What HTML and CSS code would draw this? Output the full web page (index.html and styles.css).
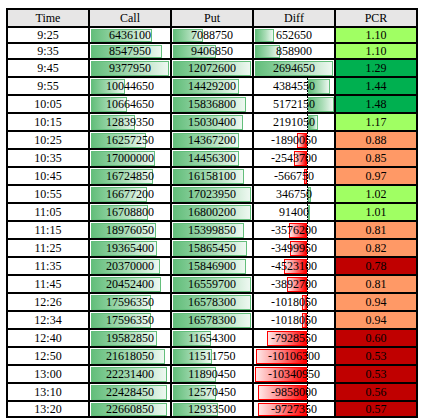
FILE: index.html
```html
<!DOCTYPE html>
<html>
<head>
<meta charset="utf-8">
<link rel="stylesheet" href="styles.css">
</head>
<body>
<table class="grid">
  <thead>
    <tr class="head"><th>Time</th><th>Call</th><th>Put</th><th>Diff</th><th>PCR</th></tr>
  </thead>
  <tbody>
    <tr class="short"><td>9:25</td><td class="bc"><span class="bar g" style="width:61px"></span><span class="v">6436100</span></td><td class="bc"><span class="bar g" style="width:30px"></span><span class="v">7088750</span></td><td class="bc"><span class="bar g" style="width:19px"></span><span class="v">652650</span></td><td class="pcr lg">1.10</td></tr>
    <tr class="short"><td>9:35</td><td class="bc"><span class="bar g" style="width:71px"></span><span class="v">8547950</span></td><td class="bc"><span class="bar g" style="width:43px"></span><span class="v">9406850</span></td><td class="bc"><span class="bar g" style="width:25px"></span><span class="v">858900</span></td><td class="pcr lg">1.10</td></tr>
    <tr><td>9:45</td><td class="bc"><span class="bar g" style="width:78px"></span><span class="v">9377950</span></td><td class="bc"><span class="bar g" style="width:78px"></span><span class="v">12072600</span></td><td class="bc"><span class="bar g" style="width:78px"></span><span class="v">2694650</span></td><td class="pcr dg">1.29</td></tr>
    <tr><td>9:55</td><td class="bc"><span class="bar g" style="width:34px"></span><span class="v">10044650</span></td><td class="bc"><span class="bar g" style="width:66px"></span><span class="v">14429200</span></td><td class="bc ax"><span class="bar gp" style="width:22px"></span><span class="axis"></span><span class="v">4384550</span></td><td class="pcr dg">1.44</td></tr>
    <tr><td>10:05</td><td class="bc"><span class="bar g" style="width:36px"></span><span class="v">10664650</span></td><td class="bc"><span class="bar g" style="width:73px"></span><span class="v">15836800</span></td><td class="bc ax"><span class="bar gp" style="width:26px"></span><span class="axis"></span><span class="v">5172150</span></td><td class="pcr dg">1.48</td></tr>
    <tr><td>10:15</td><td class="bc"><span class="bar g" style="width:44px"></span><span class="v">12839350</span></td><td class="bc"><span class="bar g" style="width:70px"></span><span class="v">15030400</span></td><td class="bc ax"><span class="bar gp" style="width:10px"></span><span class="axis"></span><span class="v">2191050</span></td><td class="pcr lg">1.17</td></tr>
    <tr><td>10:25</td><td class="bc"><span class="bar g" style="width:55px"></span><span class="v">16257250</span></td><td class="bc"><span class="bar g" style="width:66px"></span><span class="v">14367200</span></td><td class="bc ax"><span class="bar rn" style="width:10px"></span><span class="axis"></span><span class="v">-1890050</span></td><td class="pcr or">0.88</td></tr>
    <tr><td>10:35</td><td class="bc"><span class="bar g" style="width:64px"></span><span class="v">17000000</span></td><td class="bc"><span class="bar g" style="width:66px"></span><span class="v">14456300</span></td><td class="bc ax"><span class="bar rn" style="width:13px"></span><span class="axis"></span><span class="v">-2543700</span></td><td class="pcr or">0.85</td></tr>
    <tr><td>10:45</td><td class="bc"><span class="bar g" style="width:62px"></span><span class="v">16724850</span></td><td class="bc"><span class="bar g" style="width:71px"></span><span class="v">16158100</span></td><td class="bc ax"><span class="bar rn" style="width:3px"></span><span class="axis"></span><span class="v">-566750</span></td><td class="pcr or">0.97</td></tr>
    <tr><td>10:55</td><td class="bc"><span class="bar g" style="width:56px"></span><span class="v">16677200</span></td><td class="bc"><span class="bar g" style="width:78px"></span><span class="v">17023950</span></td><td class="bc ax"><span class="bar gp" style="width:3px"></span><span class="axis"></span><span class="v">346750</span></td><td class="pcr lg">1.02</td></tr>
    <tr><td>11:05</td><td class="bc"><span class="bar g" style="width:57px"></span><span class="v">16708800</span></td><td class="bc"><span class="bar g" style="width:78px"></span><span class="v">16800200</span></td><td class="bc ax"><span class="bar gp" style="width:1px"></span><span class="axis"></span><span class="v">91400</span></td><td class="pcr lg">1.01</td></tr>
    <tr><td>11:15</td><td class="bc"><span class="bar g" style="width:65px"></span><span class="v">18976050</span></td><td class="bc"><span class="bar g" style="width:71px"></span><span class="v">15399850</span></td><td class="bc ax"><span class="bar rn" style="width:18px"></span><span class="axis"></span><span class="v">-3576200</span></td><td class="pcr or">0.81</td></tr>
    <tr><td>11:25</td><td class="bc"><span class="bar g" style="width:66px"></span><span class="v">19365400</span></td><td class="bc"><span class="bar g" style="width:74px"></span><span class="v">15865450</span></td><td class="bc ax"><span class="bar rn" style="width:17px"></span><span class="axis"></span><span class="v">-3499950</span></td><td class="pcr or">0.82</td></tr>
    <tr><td>11:35</td><td class="bc"><span class="bar g" style="width:69px"></span><span class="v">20370000</span></td><td class="bc"><span class="bar g" style="width:73px"></span><span class="v">15846900</span></td><td class="bc ax"><span class="bar rn" style="width:23px"></span><span class="axis"></span><span class="v">-4523100</span></td><td class="pcr dr">0.78</td></tr>
    <tr><td>11:45</td><td class="bc"><span class="bar g" style="width:70px"></span><span class="v">20452400</span></td><td class="bc"><span class="bar g" style="width:78px"></span><span class="v">16559700</span></td><td class="bc ax"><span class="bar rn" style="width:20px"></span><span class="axis"></span><span class="v">-3892700</span></td><td class="pcr or">0.81</td></tr>
    <tr><td>12:26</td><td class="bc"><span class="bar g" style="width:60px"></span><span class="v">17596350</span></td><td class="bc"><span class="bar g" style="width:78px"></span><span class="v">16578300</span></td><td class="bc ax"><span class="bar rn" style="width:5px"></span><span class="axis"></span><span class="v">-1018050</span></td><td class="pcr or">0.94</td></tr>
    <tr><td>12:34</td><td class="bc"><span class="bar g" style="width:60px"></span><span class="v">17596350</span></td><td class="bc"><span class="bar g" style="width:78px"></span><span class="v">16578300</span></td><td class="bc ax"><span class="bar rn" style="width:5px"></span><span class="axis"></span><span class="v">-1018050</span></td><td class="pcr or">0.94</td></tr>
    <tr><td>12:40</td><td class="bc"><span class="bar g" style="width:66px"></span><span class="v">19582850</span></td><td class="bc"><span class="bar g" style="width:38px"></span><span class="v">11654300</span></td><td class="bc ax"><span class="bar rn" style="width:40px"></span><span class="axis"></span><span class="v">-7928550</span></td><td class="pcr dr">0.60</td></tr>
    <tr><td>12:50</td><td class="bc"><span class="bar g" style="width:74px"></span><span class="v">21618050</span></td><td class="bc"><span class="bar g" style="width:39px"></span><span class="v">11511750</span></td><td class="bc ax"><span class="bar rn" style="width:51px"></span><span class="axis"></span><span class="v">-10106300</span></td><td class="pcr dr">0.53</td></tr>
    <tr><td>13:00</td><td class="bc"><span class="bar g" style="width:76px"></span><span class="v">22231400</span></td><td class="bc"><span class="bar g" style="width:43px"></span><span class="v">11890450</span></td><td class="bc ax"><span class="bar rn" style="width:52px"></span><span class="axis"></span><span class="v">-10340950</span></td><td class="pcr dr">0.53</td></tr>
    <tr><td>13:10</td><td class="bc"><span class="bar g" style="width:76px"></span><span class="v">22428450</span></td><td class="bc"><span class="bar g" style="width:43px"></span><span class="v">12570450</span></td><td class="bc ax"><span class="bar rn" style="width:49px"></span><span class="axis"></span><span class="v">-9858000</span></td><td class="pcr dr">0.56</td></tr>
    <tr class="short"><td>13:20</td><td class="bc"><span class="bar g" style="width:76px"></span><span class="v">22660850</span></td><td class="bc"><span class="bar g" style="width:45px"></span><span class="v">12933500</span></td><td class="bc ax"><span class="bar rn" style="width:49px"></span><span class="axis"></span><span class="v">-9727350</span></td><td class="pcr dr">0.57</td></tr>
  </tbody>
</table>
</body>
</html>
```
FILE: styles.css
```css
html, body {
  margin: 0;
  padding: 0;
  background: #ffffff;
}

body {
  padding: 8px 0 0 6px;
  font-family: "Liberation Serif", "Times New Roman", serif;
  font-size: 12px;
  color: #000000;
}

.grid {
  border-collapse: separate;
  border-spacing: 0;
  border-top: 2px solid #000;
  border-left: 2px solid #000;
}

.grid th,
.grid td {
  border-right: 2px solid #000;
  border-bottom: 2px solid #000;
  width: 80px;
  min-width: 80px;
  max-width: 80px;
  padding: 0;
  text-align: center;
  vertical-align: middle;
  font-weight: normal;
  box-sizing: content-box;
  white-space: nowrap;
  height: 16px;
  line-height: 16px;
}

.grid tr.short td {
  height: 14px;
  line-height: 14px;
}

.head th {
  background: #e7e6e6;
}

.bc {
  position: relative;
}

.bar {
  position: absolute;
  top: 1px;
  bottom: 0;
  box-sizing: border-box;
}

.bar.g {
  left: 1px;
  border: 1px solid #63be7b;
  background: linear-gradient(to right, #63be7b 0%, #a9dcb6 55%, #eef8f1 100%);
}

.bar.gp {
  left: 54px;
  border: 1px solid #63be7b;
  background: linear-gradient(to right, #63be7b 0%, #a9dcb6 55%, #eef8f1 100%);
}

.bar.rn {
  right: 27px;
  border: 1px solid #ff0000;
  background: linear-gradient(to left, #ff0000 0%, #ff8a8a 55%, #ffe6e6 100%);
}

.axis {
  position: absolute;
  left: 53px;
  top: 0;
  bottom: 0;
  width: 1px;
  background: repeating-linear-gradient(to bottom, #000 0, #000 2px, transparent 2px, transparent 3px);
}

.v {
  position: relative;
}

.pcr.lg { background: #a0ff63; }
.pcr.dg { background: #00b050; }
.pcr.or { background: #ff9966; }
.pcr.dr { background: #c00000; }
```
